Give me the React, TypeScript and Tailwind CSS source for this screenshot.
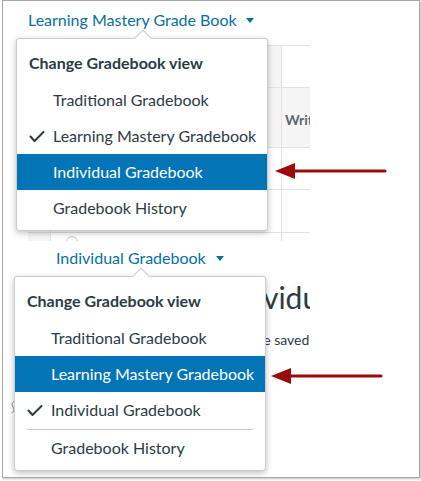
import React from 'react'

type Item = { label: string; checked?: boolean; active?: boolean; dividerBefore?: boolean }

const FIRST_MENU: Item[] = [
  { label: 'Traditional Gradebook' },
  { label: 'Learning Mastery Gradebook', checked: true },
  { label: 'Individual Gradebook', active: true },
  { label: 'Gradebook History' },
]

const SECOND_MENU: Item[] = [
  { label: 'Traditional Gradebook' },
  { label: 'Learning Mastery Gradebook', active: true },
  { label: 'Individual Gradebook', checked: true },
  { label: 'Gradebook History', dividerBefore: true },
]

const Caret = () => (
  <svg width="8" height="5" viewBox="0 0 8 5" className="inline-block">
    <path d="M0 0h8L4 5z" fill="#0770a3" />
  </svg>
)

const CheckMark = () => (
  <svg width="16" height="12" viewBox="0 0 16 12" className="absolute left-[12px] top-[13px]">
    <path d="M1.5 5.5 5.5 10 14.5 1" fill="none" stroke="#2d3b45" strokeWidth="2" strokeLinecap="round" strokeLinejoin="round" />
  </svg>
)

const Arrow = ({ className }: { className: string }) => (
  <svg width="112" height="18" viewBox="0 0 112 18" className={className}>
    <path d="M18 9h92" stroke="#9b0b0b" strokeWidth="3" strokeLinecap="round" />
    <path d="M0 9 20 1v16z" fill="#9b0b0b" />
  </svg>
)

function ViewMenu({ items, className }: { items: Item[]; className: string }) {
  return (
    <div
      className={`absolute w-[252px] bg-white border border-[#c7cdd1] rounded-[3px] shadow-[0_2px_6px_rgba(0,0,0,0.25)] pt-[5px] pb-[4px] ${className}`}
    >
      {/* little pointer up to the trigger */}
      <div className="absolute -top-[7px] left-[120px] w-3 h-3 rotate-45 bg-white border-t border-l border-[#c7cdd1]" />
      <div className="h-[38px] leading-[38px] pl-[12px] text-[16px] font-bold text-[#2d3b45]">Change Gradebook view</div>
      {items.map((it) => (
        <React.Fragment key={it.label}>
          {it.dividerBefore && <div className="h-px mt-px mx-[12px] bg-[#c7cdd1]" />}
          <div
            className={`relative h-9 leading-9 pl-[36px] text-[16px] ${
              it.active ? 'bg-[#0374b5] text-white' : 'text-[#2d3b45]'
            }`}
          >
            {it.checked && <CheckMark />}
            {it.label}
          </div>
        </React.Fragment>
      ))}
    </div>
  )
}

export default function App() {
  return (
    <div className="w-[421px] h-[481px] bg-white font-['Lato','Liberation_Sans',sans-serif]">
      <div className="relative ml-[2px] w-[418px] h-[478px] border border-[#a8a8a8] shadow-[1px_1px_2px_rgba(0,0,0,0.25)] overflow-hidden">
        {/* learning mastery screen */}
        <section className="relative h-[240px]">
          <div className="pt-[7px] pl-[25px] h-[31px] leading-6 text-[16px] text-[#0770a3] flex items-center gap-[9px]">
            <span className="leading-6">Learning Mastery Grade Book</span>
            <Caret />
          </div>
          <div className="mt-[13px] ml-[25px] w-[282px] grid grid-cols-[22px_230px_28px] grid-rows-[41px_59px_41px_42px_12px] gap-px bg-[#dfe3e6] pt-px">
            <div className="bg-[#f5f5f5]" />
            <div className="bg-[#f5f5f5]" />
            <div className="bg-white" />
            <div className="bg-[#f5f5f5]" />
            <div className="bg-[#f5f5f5]" />
            <div className="bg-[#f5f5f5] pl-[3px] pt-[21px] text-[14px] font-bold text-[#5b6770] overflow-hidden whitespace-nowrap">Writing</div>
            <div className="bg-white" />
            <div className="bg-white" />
            <div className="bg-white" />
            <div className="bg-white" />
            <div className="bg-white" />
            <div className="bg-white" />
            <div className="bg-[#f5f5f5]" />
            <div className="bg-white pl-[15px] pt-[3px]">
              <div className="w-3 h-3 rounded-full border border-[#c7cdd1]" />
            </div>
            <div className="bg-white" />
          </div>
          <ViewMenu items={FIRST_MENU} className="left-[13px] top-[37px]" />
          <Arrow className="absolute left-[272px] top-[161px]" />
        </section>

        {/* individual gradebook screen */}
        <section className="relative h-[236px] bg-white">
          <div className="pt-[5px] pl-[53px] h-[29px] text-[16px] text-[#0770a3] flex items-center gap-[10px]">
            <span className="leading-6">Individual Gradebook</span>
            <Caret />
          </div>
          <div className="w-[307px] overflow-hidden whitespace-nowrap text-[#2d3b45]">
            <h1 className="mt-[9px] pl-[211px] text-[30px] leading-9 font-normal">Individual Gradebook</h1>
            <p className="mt-[15px] pl-[172px] text-[14px] leading-5">Changes will be saved automatically</p>
            <div className="mt-[50px] pl-[7px] h-[16px]">
              <svg width="6" height="14" viewBox="0 0 6 14">
                <path d="M4.5 1C2 2 1.5 4.5 3 7s1 5-1.5 6" fill="none" stroke="#8a8f94" strokeWidth="1" />
              </svg>
            </div>
          </div>
          <ViewMenu items={SECOND_MENU} className="left-[11px] top-[35px]" />
          <Arrow className="absolute left-[268px] top-[126px]" />
        </section>
      </div>
    </div>
  )
}
